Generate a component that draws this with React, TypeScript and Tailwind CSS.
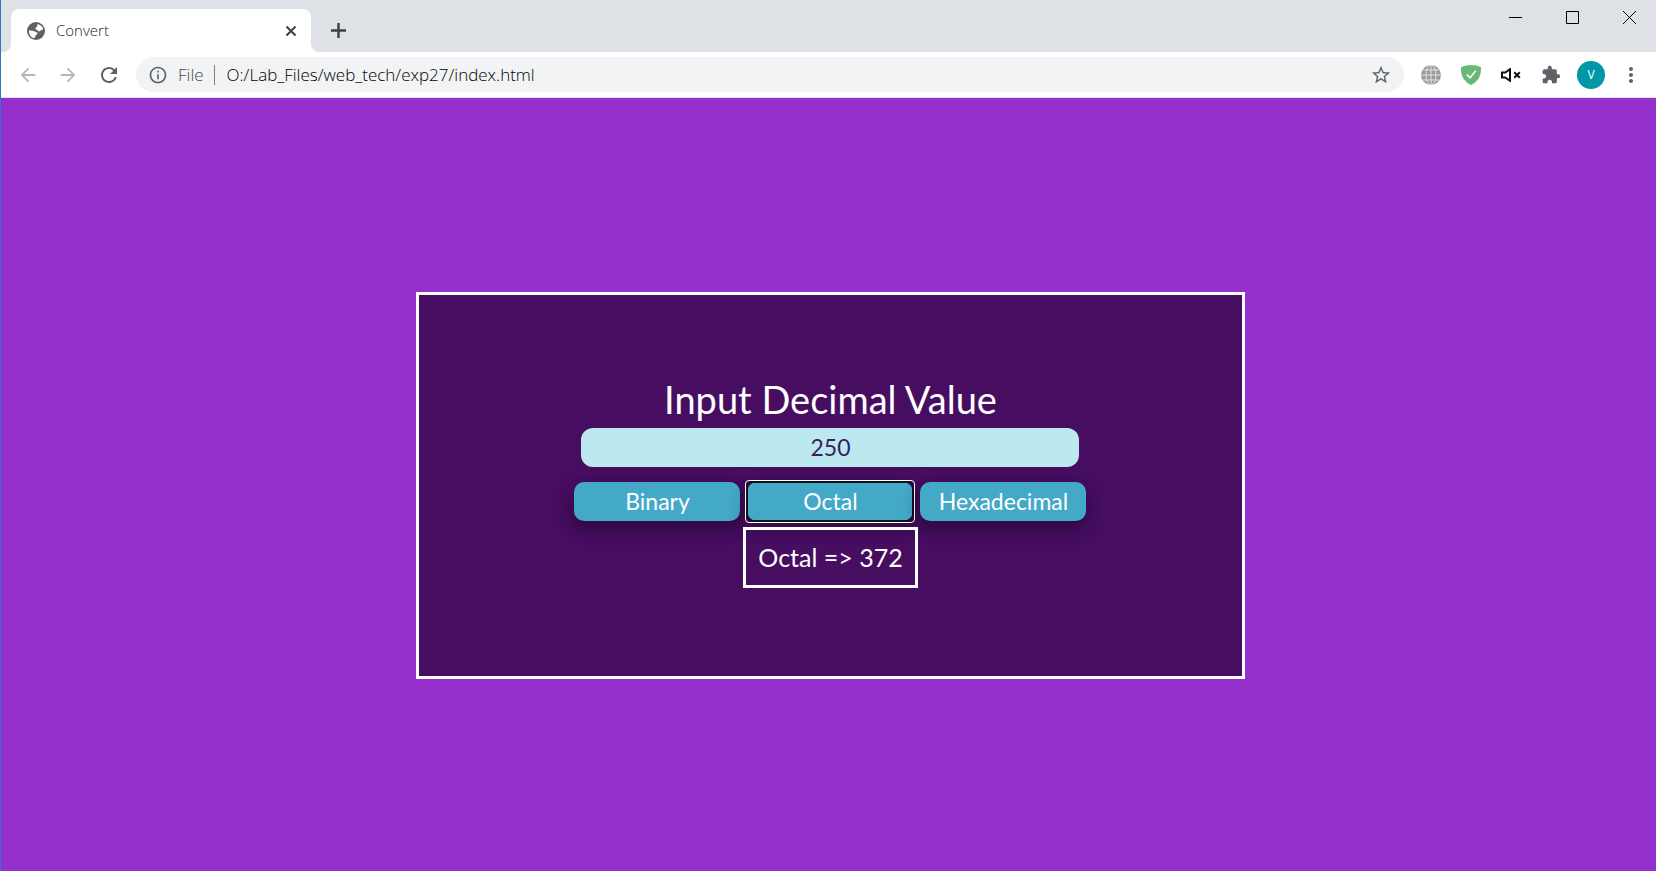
import { useState } from "react";
import {
  MdArrowBack,
  MdArrowForward,
  MdRefresh,
  MdInfoOutline,
  MdStarBorder,
  MdExtension,
  MdMoreVert,
} from "react-icons/md";

function Favicon() {
  return (
    <svg viewBox="0 0 18 18" className="mx-[2px] size-[18px]" aria-hidden="true">
      <circle cx="9" cy="9" r="9" fill="#5f6368" />
      <path d="M10.500 2c2.800.5 5 2.500 5.700 5.200-.8.9-2 .6-2.700 1.600-.9 1.100-2.300.3-3-.5-.7-.9-2.300-.4-2.200-1.700 0-1 1.400-.9 1.500-1.900.1-1 1.200-1.300.7-2.700z" fill="#fff" />
      <path d="M1.900 8.400c1.600.2 3.200.1 4.600.7 1.300.6 2.300 1.200 3.500 1.500.9.300.6 1.700-.3 2-1.300.4-1 1.600-1.700 2.300-.4.500-.5.900-.4 1.300C4.200 15.500 1.800 12.600 1.900 8.400z" fill="#fff" />
    </svg>
  );
}

function GlobeGrid() {
  return (
    <svg viewBox="0 0 20 20" className="size-5" aria-hidden="true">
      <circle cx="10" cy="10" r="10" fill="#9a9a9a" />
      <g fill="none" stroke="#e4e4e4" strokeWidth="1">
        <path d="M10 0v20M0 10h20M2 5h16M2 15h16" />
        <ellipse cx="10" cy="10" rx="5" ry="10" />
      </g>
    </svg>
  );
}

function Shield() {
  return (
    <svg viewBox="0 0 20 20" className="size-5" aria-hidden="true">
      <path d="M10 0C7 0 3 .7 0 2.200 0 9 .6 15 10 20c9.400-5 10-11 10-17.800C17 .7 13 0 10 0z" fill="#68b877" />
      <path d="M5.800 9.400l3.200 3.400 5.800-7" fill="none" stroke="#fff" strokeWidth="1.500" />
    </svg>
  );
}

function Muted() {
  return (
    <svg viewBox="0 0 20 14" className="h-[14px] w-5" fill="none" stroke="#111" strokeWidth="2" aria-hidden="true">
      <path d="M1 4.500h3.200L9 1.200v11.600L4.200 9.500H1z" />
      <path d="M13.200 4.200l5.600 5.600M18.800 4.200l-5.600 5.600" />
    </svg>
  );
}

const bases = [
  { name: "Binary", radix: 2 },
  { name: "Octal", radix: 8 },
  { name: "Hexadecimal", radix: 16 },
];

export default function App() {
  const [value, setValue] = useState("250");
  const [active, setActive] = useState(1);
  const base = bases[active];
  const result = (parseInt(value, 10) || 0).toString(base.radix).toUpperCase();

  return (
    <div className="flex min-h-screen flex-col border-l border-[#2b78c0] bg-[#9530cd] font-['Open_Sans',sans-serif]">
      <header>
        <div className="flex h-[52px] items-end bg-[#dee1e6] pl-[2px]">
          <div className="size-2 bg-white">
            <div className="size-2 rounded-br-lg bg-[#dee1e6]" />
          </div>
          <div className="flex h-[43px] w-[300px] items-center rounded-t-lg bg-white pr-[14px] pl-[14px]">
            <Favicon />
            <span className="ml-[9px] flex-1 text-[15px] font-light text-[#202428]">Convert</span>
            <button aria-label="Close tab" className="flex size-3 items-center justify-center">
              <svg viewBox="0 0 12 12" className="size-3" stroke="#3c4043" strokeWidth="2">
                <path d="M1.500 1.500l9 9M10.500 1.500l-9 9" />
              </svg>
            </button>
          </div>
          <div className="size-2 bg-white">
            <div className="size-2 rounded-bl-lg bg-[#dee1e6]" />
          </div>
          <button aria-label="New tab" className="mb-[14px] ml-3">
            <svg viewBox="0 0 15 15" className="size-[15px]" stroke="#3c4043" strokeWidth="2.400">
              <path d="M7.500 0v15M0 7.500h15" />
            </svg>
          </button>
          <div className="mr-5 mb-7 ml-auto flex items-center gap-11">
            <button aria-label="Minimize">
              <svg viewBox="0 0 13 13" className="size-[13px]" stroke="#000">
                <path d="M0 6.500h13" />
              </svg>
            </button>
            <button aria-label="Maximize">
              <svg viewBox="0 0 13 13" className="size-[13px]" stroke="#000" fill="none">
                <path d="M.5.5h12v12H.5z" />
              </svg>
            </button>
            <button aria-label="Close window">
              <svg viewBox="0 0 13 13" className="size-[13px]" stroke="#000">
                <path d="M0 0l13 13M13 0L0 13" />
              </svg>
            </button>
          </div>
        </div>
        <div className="flex h-[46px] items-center border-b border-[#dfe0e3] bg-white pr-[13px] pl-4">
          <div className="flex items-center gap-[18px]">
            <button aria-label="Back"><MdArrowBack className="size-[22px] text-[#b4b6b8]" /></button>
            <button aria-label="Forward"><MdArrowForward className="size-[22px] text-[#b4b6b8]" /></button>
            <button aria-label="Reload"><MdRefresh className="size-6 text-[#5f6368]" /></button>
          </div>
          <div className="ml-[15px] flex h-[35px] flex-1 items-center rounded-full bg-[#f1f3f4] pr-3 pl-3">
            <MdInfoOutline className="size-5 text-[#5f6368]" />
            <span className="ml-[10px] text-[17px] font-light text-[#45494d]">File</span>
            <span className="mr-3 ml-[10px] h-5 w-px bg-[#7d8083]" />
            <input
              aria-label="Address"
              defaultValue="O:/Lab_Files/web_tech/exp27/index.html"
              className="min-w-0 flex-1 bg-transparent text-[17px] font-light text-black outline-none"
            />
            <button aria-label="Bookmark"><MdStarBorder className="size-[22px] text-[#5f6368]" /></button>
          </div>
          <div className="ml-[17px] flex items-center gap-5">
            <button aria-label="Network"><GlobeGrid /></button>
            <button aria-label="Protection"><Shield /></button>
            <button aria-label="Mute"><Muted /></button>
            <button aria-label="Extensions"><MdExtension className="size-5 text-[#5f6368]" /></button>
          </div>
          <button className="ml-4 flex size-7 items-center justify-center rounded-full bg-[#0097a7] text-[12px] text-white">V</button>
          <button aria-label="Menu" className="ml-[14px]"><MdMoreVert className="size-6 text-[#5f6368]" /></button>
        </div>
      </header>

      <main className="flex flex-1 pt-[2px] pl-1 font-['Lato',sans-serif]">
        <section className="m-auto flex min-h-[387px] w-[50.2%] min-w-[560px] flex-col items-center justify-center border-3 border-white bg-[#460d61] pb-2 text-white">
          <label htmlFor="decimal" className="mb-[6px] text-[38px] leading-[46px]">Input Decimal Value</label>
          <input
            id="decimal"
            value={value}
            onChange={(e) => setValue(e.target.value)}
            className="h-[39px] w-[498px] rounded-xl bg-[#bce9f0] text-center text-[23px] text-[#3a1e5c] outline-none"
          />
          <div className="mt-[15px] flex gap-[7px]">
            {bases.map((b, i) => (
              <button
                key={b.name}
                onClick={() => setActive(i)}
                className={
                  "relative h-[39px] w-[166px] rounded-[10px] bg-[#44a8c7] text-[23px] leading-[39px] shadow-[0_8px_16px_0_rgba(0,0,0,0.2),0_6px_20px_0_rgba(0,0,0,0.19)] outline-none " +
                  (i === active
                    ? "before:absolute before:-inset-[2px] before:rounded-[4px] before:border before:border-white after:absolute after:-inset-px after:rounded-[6px] after:border-2 after:border-[#101020]"
                    : "")
                }
              >
                {b.name}
              </button>
            ))}
          </div>
          <output htmlFor="decimal" className="relative mt-[6px] border-3 border-white px-3 py-[12px] text-[25px] leading-[31px]">
            {base.name} =&gt; {result}
          </output>
        </section>
      </main>
    </div>
  );
}
